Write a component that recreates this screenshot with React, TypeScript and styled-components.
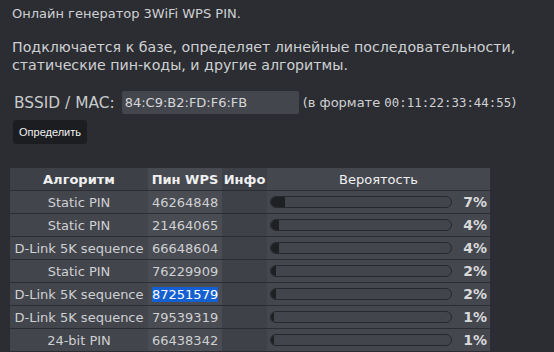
import React from 'react';
import styled, { createGlobalStyle } from 'styled-components';

const GlobalStyle = createGlobalStyle`
  body {
    margin: 0;
    background: #2b2d32;
    color: #cfd0d2;
    font-family: 'DejaVu Sans', Verdana, sans-serif;
  }
`;

const Page = styled.div`
  padding: 5px 0 0 12px;
  font-size: 13px;
`;

const Title = styled.p`
  margin: 0;
  line-height: 18px;
`;

const Intro = styled.p`
  margin: 15px 0 0;
  line-height: 18px;
  font-size: 14.2px;
`;

const FormRow = styled.div`
  display: flex;
  align-items: center;
  margin-top: 17px;
  font-size: 13px;
`;

const Label = styled.label`
  font-size: 15.4px;
  margin: 0 7px 0 2px;
  color: #c9cacc;
`;

const MacInput = styled.input`
  width: 177px;
  height: 23px;
  box-sizing: border-box;
  border: none;
  border-radius: 2px;
  background: #44464d;
  color: #d6d7d9;
  font-family: 'DejaVu Sans', sans-serif;
  font-size: 13px;
  padding: 0 3px;
  margin-right: 4px;
  outline: none;
`;

const Mono = styled.span`
  font-family: 'DejaVu Sans Mono', monospace;
  font-size: 12.4px;
`;

const Button = styled.button`
  display: block;
  margin-top: 6px;
  margin-left: 1px;
  height: 24px;
  padding: 0 6px;
  border: none;
  border-radius: 3px;
  background: #1c1d21;
  color: #f2f2f2;
  font-family: 'Liberation Sans', Arial, sans-serif;
  font-size: 11px;
`;

const Table = styled.table`
  margin: 23px 0 0 -2px;
  border-collapse: separate;
  border-spacing: 0 1px;
  width: 480px;
  font-size: 13px;
`;

const Th = styled.th<{ $bg: string; $w: number; $light?: boolean }>`
  width: ${(p) => p.$w}px;
  height: 22px;
  padding: 0;
  background: ${(p) => p.$bg};
  color: #f0f0f0;
  font-weight: ${(p) => (p.$light ? 'normal' : 'bold')};
  text-align: center;
`;

const Td = styled.td<{ $bg: string; $align?: string }>`
  height: 22px;
  padding: 0 0 0 ${(p) => (p.$align === 'left' ? '4px' : '0')};
  background: ${(p) => p.$bg};
  text-align: ${(p) => p.$align || 'center'};
  color: #cfd0d2;
  white-space: nowrap;
`;

const Selected = styled.span`
  background: #1560d0;
  color: #ffffff;
`;

const ProbCell = styled.div`
  display: flex;
  align-items: center;
  padding: 0 3px;
`;

const Bar = styled.div`
  flex: 0 0 182px;
  height: 12px;
  box-sizing: border-box;
  border: 1px solid #26282c;
  border-radius: 6px;
  background: #43454c;
  overflow: hidden;
`;

const Fill = styled.div`
  height: 100%;
  background: #1e2024;
`;

const Percent = styled.span`
  flex: 1;
  text-align: right;
  font-weight: bold;
  font-size: 14px;
  color: #d8d9db;
`;

const rows = [
  { algo: 'Static PIN', pin: '46264848', p: 7 },
  { algo: 'Static PIN', pin: '21464065', p: 4 },
  { algo: 'D-Link 5K sequence', pin: '66648604', p: 4 },
  { algo: 'Static PIN', pin: '76229909', p: 2 },
  { algo: 'D-Link 5K sequence', pin: '87251579', p: 2, sel: true },
  { algo: 'D-Link 5K sequence', pin: '79539319', p: 1 },
  { algo: '24-bit PIN', pin: '66438342', p: 1 },
];

export default function App() {
  return (
    <>
      <GlobalStyle />
      <Page>
        <Title>Онлайн генератор 3WiFi WPS PIN.</Title>
        <Intro>
          Подключается к базе, определяет линейные последовательности,
          <br />
          статические пин-коды, и другие алгоритмы.
        </Intro>
        <FormRow>
          <Label>BSSID / MAC:</Label>
          <MacInput defaultValue="84:C9:B2:FD:F6:FB" />
          <span>
            (в формате <Mono>00:11:22:33:44:55</Mono>)
          </span>
        </FormRow>
        <Button>Определить</Button>
        <Table>
          <thead>
            <tr>
              <Th $bg="#3e4048" $w={138}>Алгоритм</Th>
              <Th $bg="#484a52" $w={74}>Пин WPS</Th>
              <Th $bg="#3e4048" $w={45}>Инфо</Th>
              <Th $bg="#45474f" $w={223} $light>Вероятость</Th>
            </tr>
          </thead>
          <tbody>
            {rows.map((r, i) => (
              <tr key={i}>
                <Td $bg="#43454d">{r.algo}</Td>
                <Td $bg="#4a4c53" $align="left">
                  {r.sel ? <Selected>{r.pin}</Selected> : r.pin}
                </Td>
                <Td $bg="#3f4148" />
                <Td $bg="#45474e">
                  <ProbCell>
                    <Bar>
                      <Fill style={{ width: `calc(${r.p}% + 1px)` }} />
                    </Bar>
                    <Percent>{r.p}%</Percent>
                  </ProbCell>
                </Td>
              </tr>
            ))}
          </tbody>
        </Table>
      </Page>
    </>
  );
}
